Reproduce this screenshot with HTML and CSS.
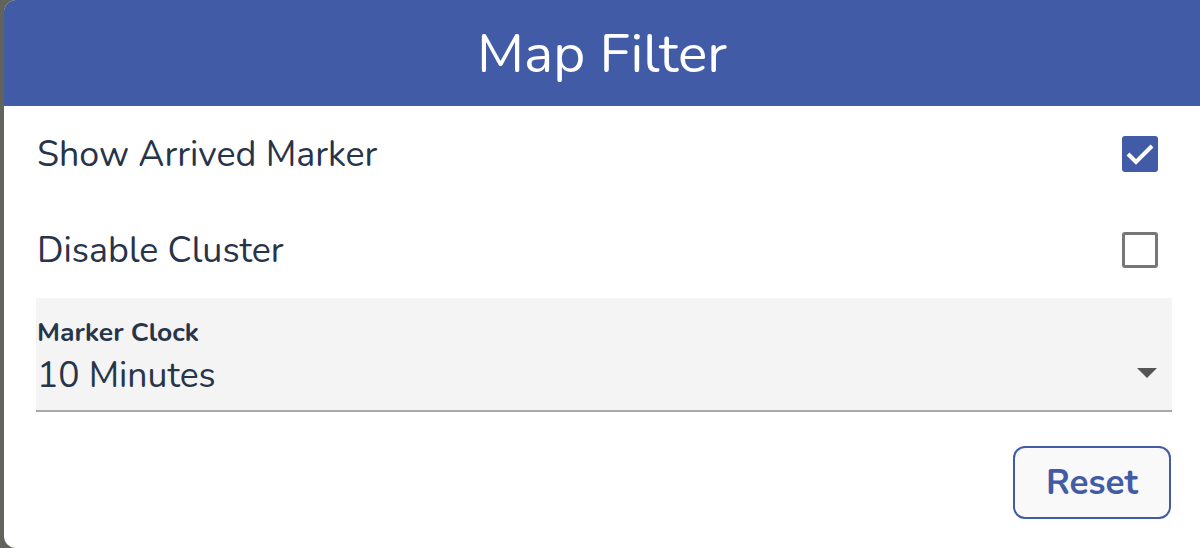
FILE: index.html
```html
<!DOCTYPE html>
<html lang="en">
<head>
<meta charset="utf-8">
<title>Map Filter</title>
<link rel="stylesheet" href="styles.css">
</head>
<body>
  <div class="dialog">
    <div class="dialog-header">Map Filter</div>
    <div class="dialog-body">
      <div class="row">
        <span class="row-label">Show Arrived Marker</span>
        <span class="check checked">
          <svg width="30" height="24" viewBox="0 0 30 24"><path d="M3 12 L11 20 L27 4" fill="none" stroke="#fff" stroke-width="4"/></svg>
        </span>
      </div>
      <div class="row">
        <span class="row-label">Disable Cluster</span>
        <span class="check"></span>
      </div>
      <div class="select">
        <div class="select-label">Marker Clock</div>
        <div class="select-value">
          <span>10 Minutes</span>
          <span class="arrow"></span>
        </div>
      </div>
      <div class="actions">
        <button class="btn-reset">Reset</button>
      </div>
    </div>
  </div>
</body>
</html>
```

FILE: styles.css
```css
body {
  margin: 0;
  background: #62635b;
  font-family: "Nunito", "Lato", "Open Sans", sans-serif;
  color: #273449;
}
.dialog {
  margin-left: 4px;
  height: 548px;
  background: #fff;
  border-radius: 12px 0 0 12px;
  overflow: hidden;
}
.dialog-header {
  height: 106px;
  background: #425ba6;
  color: #fff;
  font-size: 55px;
  display: flex;
  align-items: center;
  justify-content: center;
}
.dialog-body {
  padding: 0 28px 0 32px;
}
.row {
  height: 96px;
  display: flex;
  align-items: center;
  justify-content: space-between;
  padding: 0 14px 0 1px;
}
.row-label {
  font-size: 35.8px;
}
.check {
  width: 30px;
  height: 30px;
  border: 3px solid #777;
  border-radius: 3px;
  display: flex;
  align-items: center;
  justify-content: center;
}
.check.checked {
  background: #425ba6;
  border-color: #425ba6;
}
.select {
  height: 112px;
  background: #f4f4f4;
  border-bottom: 2px solid #a9a9a9;
  padding: 0 14px 0 1px;
}
.select-label {
  font-size: 26.5px;
  font-weight: bold;
  padding-top: 19px;
  line-height: 1.2;
}
.select-value {
  font-size: 35.5px;
  line-height: 1.2;
  margin-top: 6px;
  display: flex;
  align-items: center;
  justify-content: space-between;
}
.arrow {
  width: 0;
  height: 0;
  border-left: 10px solid transparent;
  border-right: 10px solid transparent;
  border-top: 10px solid #555;
  margin: 0 1px 6px 0;
}
.actions {
  display: flex;
  justify-content: flex-end;
  padding-top: 34px;
}
.btn-reset {
  width: 158px;
  height: 73px;
  border: 2px solid #425ba6;
  border-radius: 12px;
  background: #f9f9f9;
  color: #425ba6;
  font-family: inherit;
  font-size: 35px;
  font-weight: bold;
  margin-right: 1px;
}
```
